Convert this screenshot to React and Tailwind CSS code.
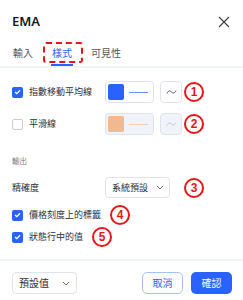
const font = { fontFamily: '"Noto Sans", "Noto Sans CJK TC", sans-serif' };

const Badge = ({ n, className = "" }) => (
  <span
    className={`flex h-[20px] w-[20px] shrink-0 items-center justify-center rounded-full border-2 border-[#e8141a] text-[12px] font-bold leading-none text-[#e8141a] ${className}`}
    style={{ fontFamily: '"Liberation Sans", sans-serif' }}
  >
    {n}
  </span>
);

const Check = ({ checked }) =>
  checked ? (
    <span className="flex h-[11px] w-[11px] shrink-0 items-center justify-center rounded-[2px] bg-[#2962ff]">
      <svg width="7" height="6" viewBox="0 0 7 6">
        <path d="M1 3 L2.8 4.6 L6 1.2" fill="none" stroke="white" strokeWidth="1.3" />
      </svg>
    </span>
  ) : (
    <span className="h-[11px] w-[11px] shrink-0 rounded-[2px] border border-[#c9ccd4] bg-white" />
  );

const Wave = ({ color }) => (
  <svg width="11" height="6" viewBox="0 0 11 6">
    <path d="M1 4.5 C2.3 1.5 4 1.5 5.5 3 S8.7 4.5 10 1.5" fill="none" stroke={color} strokeWidth="1" />
  </svg>
);

const Chevron = () => (
  <svg width="8" height="5" viewBox="0 0 8 5">
    <path d="M1 1 L4 4 L7 1" fill="none" stroke="#6a6d78" strokeWidth="1" />
  </svg>
);

export default function App() {
  return (
    <div className="flex h-[300px] w-[243px] flex-col bg-white text-[#2a2e39]" style={font}>
      {/* header */}
      <div className="flex h-[44px] items-center justify-between pl-3 pr-[13px] text-[#131722]">
        <span className="text-[13px] font-semibold">EMA</span>
        <svg width="12" height="12" viewBox="0 0 12 12">
          <path d="M1 1 L11 11 M11 1 L1 11" stroke="#3a3d47" strokeWidth="1.1" />
        </svg>
      </div>

      {/* tabs */}
      <div className="flex h-[24px] gap-[19px] border-b-2 border-[#f0f3fa] pl-[13px] text-[10px] leading-[14px]">
        <span className="pt-[2px] text-[#50535e]">輸入</span>
        <span className="relative pt-[2px] text-[#2962ff]">
          樣式
          <span className="absolute top-[20px] -left-px -right-px h-[2px] bg-[#2962ff]" />
          <span className="absolute -top-[2px] -left-[9px] -right-[11px] h-[21px] rounded-[3px] border-2 border-dashed border-[#e8141a]" />
        </span>
        <span className="pt-[2px] text-[#50535e]">可見性</span>
      </div>

      {/* body */}
      <div className="flex flex-col px-3 pt-[13px] text-[9px]">
        <div className="flex h-[22px] items-center">
          <div className="flex w-[93px] items-center gap-[6px]">
            <Check checked />
            <span>指數移動平均線</span>
          </div>
          <div className="flex h-[22px] w-[49px] items-center rounded-[4px] border border-[#e0e3eb] pl-[2px]">
            <span className="h-[16px] w-[16px] rounded-[2px] bg-[#2962ff]" />
            <span className="ml-[5px] h-px w-[19px] bg-[#6d92ff]" />
          </div>
          <div className="ml-[6px] flex h-[22px] w-[22px] items-center justify-center rounded-[4px] border border-[#e0e3eb]">
            <Wave color="#50535e" />
          </div>
          <Badge n="1" className="ml-[2px]" />
        </div>

        <div className="mt-[10px] flex h-[22px] items-center">
          <div className="flex w-[93px] items-center gap-[6px]">
            <Check />
            <span>平滑線</span>
          </div>
          <div className="flex h-[22px] w-[49px] items-center rounded-[4px] border border-[#e0e3eb] bg-[#f0f3fa] pl-[2px]">
            <span className="h-[16px] w-[16px] rounded-[2px] bg-[#f0b98e]" />
            <span className="ml-[5px] h-px w-[19px] bg-[#f3cfb4]" />
          </div>
          <div className="ml-[6px] flex h-[22px] w-[22px] items-center justify-center rounded-[4px] border border-[#e0e3eb] bg-[#f0f3fa]">
            <Wave color="#c1c4cd" />
          </div>
          <Badge n="2" className="ml-[2px]" />
        </div>

        <div className="mt-[20px] text-[7.5px] leading-[12px] text-[#787b86]">輸出</div>

        <div className="mt-[10px] flex h-[21px] items-center">
          <span className="w-[93px]">精確度</span>
          <div className="flex h-[21px] w-[65px] items-center justify-between rounded-[4px] border border-[#e0e3eb] pl-[6px] pr-[5px]">
            <span>系統預設</span>
            <Chevron />
          </div>
          <Badge n="3" className="ml-[14px]" />
        </div>

        <div className="mt-[9px] flex h-[16px] items-center gap-[6px]">
          <Check checked />
          <span>價格刻度上的標籤</span>
          <Badge n="4" className="ml-[3px]" />
        </div>

        <div className="mt-[6px] flex h-[16px] items-center gap-[6px]">
          <Check checked />
          <span>狀態行中的值</span>
          <Badge n="5" className="ml-[3px]" />
        </div>
      </div>

      {/* footer */}
      <div className="mt-[14px] border-t-2 border-[#f0f3fa]" />
      <div className="flex items-center justify-between pl-3 pr-[11px] pt-[11px] text-[10px]">
        <div className="flex h-[22px] w-[65px] items-center justify-between rounded-[4px] border border-[#e0e3eb] pl-[6px] pr-[6px]">
          <span>預設值</span>
          <Chevron />
        </div>
        <div className="flex gap-[8px]">
          <button className="flex h-[22px] w-[41px] items-center justify-center rounded-[5px] border border-[#a8bffc] text-[#2962ff]">
            取消
          </button>
          <button className="flex h-[22px] w-[41px] items-center justify-center rounded-[5px] bg-[#2962ff] text-white">
            確認
          </button>
        </div>
      </div>
    </div>
  );
}
